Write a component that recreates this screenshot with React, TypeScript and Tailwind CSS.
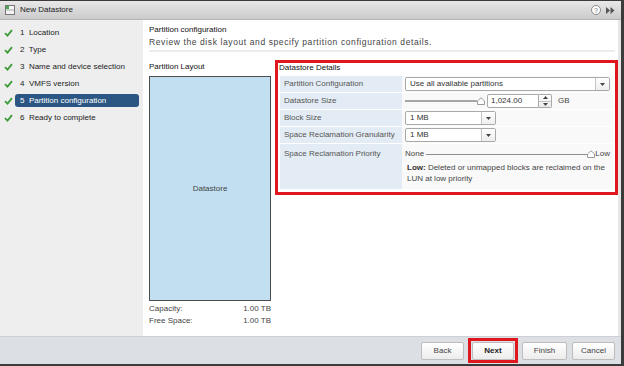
import React from "react";

const Check = () => (
  <svg width="9" height="8" viewBox="0 0 9 8" className="shrink-0">
    <path d="M1 4.2 L3.5 6.6 L8 1.2" fill="none" stroke="#3f9b3a" strokeWidth="1.8" />
  </svg>
);

const Caret = () => (
  <svg width="5" height="3" viewBox="0 0 5 3">
    <path d="M0 0 L5 0 L2.5 3 Z" fill="#444" />
  </svg>
);

const Thumb = () => (
  <svg width="8" height="8" viewBox="0 0 8 8" className="shrink-0">
    <path d="M0.5 7.5 L0.5 4 L4 0.8 L7.5 4 L7.5 7.5 Z" fill="#fff" stroke="#9a9a9a" strokeWidth="1" />
  </svg>
);

const Dropdown = ({ text, w }: { text: string; w: string }) => (
  <div className={`${w} h-[14px] flex items-stretch bg-white border border-[#a9a9a9] rounded-[2px]`}>
    <div className="flex-1 flex items-center pl-[4px] text-[#333]">{text}</div>
    <div className="w-[14px] flex items-center justify-center border-l border-[#c4c4c4] bg-gradient-to-b from-white to-[#eeeeee]">
      <Caret />
    </div>
  </div>
);

const steps = [
  "1  Location",
  "2  Type",
  "3  Name and device selection",
  "4  VMFS version",
  "5  Partition configuration",
  "6  Ready to complete",
];

const Row = ({ label, children }: { label: string; children: React.ReactNode }) => (
  <div className="flex h-[16px]">
    <div className="w-[122px] bg-[#e3ecf4] flex items-center pl-[4px] text-[#555]">{label}</div>
    <div className="flex-1 bg-[#f9f9f9] flex items-center pl-[3px]">{children}</div>
  </div>
);

const Btn = ({ text, w, bold }: { text: string; w: string; bold?: boolean }) => (
  <div
    className={`${w} h-[18px] flex items-center justify-center rounded-[2px] border border-[#bdbdbd] bg-gradient-to-b from-white to-[#ececec] ${bold ? "font-bold text-[#222]" : "text-[#444]"}`}
  >
    {text}
  </div>
);

export default function App() {
  return (
    <div className="w-[624px] h-[366px] bg-[#3b3b3b] pt-px pr-[3px] pb-[2px] font-['Liberation_Sans',Arial,sans-serif] text-[8px] leading-[10px] text-[#333] overflow-hidden">
      <div className="h-full flex flex-col bg-white">
        {/* Title bar */}
        <div className="h-[19px] flex items-center pl-[5px] pr-[6px] bg-gradient-to-b from-[#e8e8e8] to-[#cbcbcb] border-b border-[#b5b5b5]">
          <svg width="10" height="10" viewBox="0 0 10 10" className="shrink-0">
            <rect x="0.5" y="0.5" width="9" height="9" fill="#f4f4f4" stroke="#777" />
            <rect x="1" y="1" width="3" height="3" fill="#49a84a" />
            <line x1="1" y1="5" x2="9" y2="5" stroke="#aaa" />
          </svg>
          <span className="ml-[5px] text-[#222]">New Datastore</span>
          <div className="flex-1" />
          <div className="w-[10px] h-[10px] rounded-full border border-[#8a8a8a] bg-white flex items-center justify-center text-[7px] leading-none text-[#666]">
            ?
          </div>
          <svg width="9" height="7" viewBox="0 0 9 7" className="ml-[5px]">
            <path d="M0 0 L4 3.5 L0 7 Z M4.5 0 L8.5 3.5 L4.5 7 Z" fill="#555" />
          </svg>
        </div>

        {/* Body */}
        <div className="h-[316px] flex">
          {/* Sidebar */}
          <div className="w-[143px] bg-[#eeeeee] pt-[6px] flex flex-col gap-[4px]">
            {steps.map((s, i) => {
              const sel = i === 4;
              return (
                <div key={s} className="h-[13px] flex items-center">
                  <div className="w-[15px] pl-[4px] flex items-center">
                    <Check />
                  </div>
                  <div
                    className={`w-[124px] h-[13px] flex items-center pl-[5px] rounded-[3px] whitespace-pre ${
                      sel ? "bg-[#2b5683] text-white" : "text-[#222]"
                    }`}
                  >
                    {s}
                  </div>
                </div>
              );
            })}
          </div>

          {/* Main */}
          <div className="flex-1 bg-white pl-[6px] pt-[5px] border-r-[3px] border-[#e6e6e6]">
            <div className="text-[#111]">Partition configuration</div>
            <div className="mt-[2px] text-[8.5px] tracking-[0.6px] text-[#444]">
              Review the disk layout and specify partition configuration details.
            </div>
            <div className="mt-[3px] mr-[3px] h-[2px] bg-[#ececec]" />

            <div className="mt-[8px] flex gap-[4px]">
              {/* Partition layout */}
              <div className="w-[122px] pt-[2px]">
                <div className="text-[#111]">Partition Layout</div>
                <div className="mt-[4px] h-[225px] bg-[#c1dff0] border border-[#4d4d4d] flex items-center justify-center text-[#444]">
                  Datastore
                </div>
                <div className="mt-[2px] h-[12px] flex items-center justify-between text-[#444]">
                  <span>Capacity:</span>
                  <span>1.00 TB</span>
                </div>
                <div className="h-[12px] flex items-center justify-between text-[#444]">
                  <span>Free Space:</span>
                  <span>1.00 TB</span>
                </div>
              </div>

              {/* Datastore details */}
              <div className="w-[343px] h-[135px] border-[3px] border-[#e0161f] pr-[2px]">
                <div className="pl-px text-[#111]">Datastore Details</div>
                <div className="mt-[3px] ml-[2px] flex flex-col gap-px bg-white">
                  <Row label="Partition Configuration">
                    <Dropdown text="Use all available partitions" w="w-[205px]" />
                  </Row>
                  <Row label="Datastore Size">
                    <div className="flex items-center">
                      <div className="w-[72px] h-[2px] bg-[#a6a6a6]" />
                      <Thumb />
                      <div className="ml-[2px] w-[52px] h-[14px] bg-white border border-[#a9a9a9] rounded-l-[2px] flex items-center pl-[3px]">
                        1,024.00
                      </div>
                      <div className="w-[13px] h-[14px] border border-l-0 border-[#a9a9a9] rounded-r-[2px] flex flex-col bg-gradient-to-b from-white to-[#ededed]">
                        <div className="flex-1 flex items-center justify-center border-b border-[#c4c4c4]">
                          <svg width="5" height="3" viewBox="0 0 5 3"><path d="M0 3 L5 3 L2.5 0 Z" fill="#444" /></svg>
                        </div>
                        <div className="flex-1 flex items-center justify-center">
                          <Caret />
                        </div>
                      </div>
                      <span className="ml-[6px] text-[#444]">GB</span>
                    </div>
                  </Row>
                  <Row label="Block Size">
                    <Dropdown text="1 MB" w="w-[91px]" />
                  </Row>
                  <Row label="Space Reclamation Granularity">
                    <Dropdown text="1 MB" w="w-[91px]" />
                  </Row>
                  <div className="flex h-[45px]">
                    <div className="w-[122px] bg-[#e3ecf4] pl-[4px] pt-[5px] text-[#555]">Space Reclamation Priority</div>
                    <div className="flex-1 bg-[#f9f9f9] pl-[3px] pt-[5px] pr-[3px] text-[#444]">
                      <div className="h-[10px] flex items-center">
                        <span>None</span>
                        <div className="flex-1 ml-[2px] h-[1px] bg-[#8f8f8f]" />
                        <Thumb />
                        <span>Low</span>
                      </div>
                      <div className="mt-[3px] pl-[2px] leading-[11px]">
                        <span className="font-bold text-[#333]">Low:</span> Deleted or unmapped blocks are reclaimed on the
                        <br />
                        LUN at low priority
                      </div>
                    </div>
                  </div>
                </div>
              </div>
            </div>
          </div>
        </div>

        {/* Footer */}
        <div className="h-[28px] bg-[#dcdfe4] border-t border-[#cdd0d6] flex items-center justify-end pr-[6px]">
          <Btn text="Back" w="w-[43px]" />
          <div className="ml-[4px] h-[25px] w-[50px] border-[3px] border-[#e0161f] flex items-center justify-end pr-px">
            <Btn text="Next" w="w-[42px]" bold />
          </div>
          <div className="ml-[4px]">
            <Btn text="Finish" w="w-[45px]" />
          </div>
          <div className="ml-[5px]">
            <Btn text="Cancel" w="w-[43px]" />
          </div>
        </div>
      </div>
    </div>
  );
}
